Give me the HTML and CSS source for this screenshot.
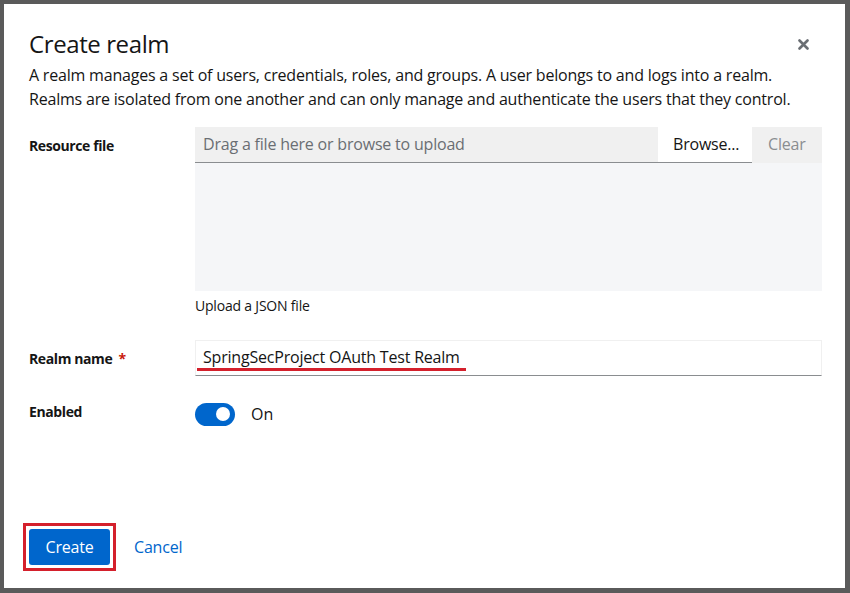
FILE: index.html
```html
<!DOCTYPE html>
<html lang="en">
<head>
<meta charset="utf-8">
<title>Create realm</title>
<link rel="stylesheet" href="styles.css">
</head>
<body>
<div class="modal">
  <header class="modal-header">
    <div class="title-row">
      <h1 class="title">Create realm</h1>
      <button class="close" aria-label="Close">
        <svg width="11" height="11" viewBox="0 0 11 11"><path d="M1.5 1.5 L9.5 9.5 M9.5 1.5 L1.5 9.5" stroke="#6a6e73" stroke-width="2.6" stroke-linecap="round"/></svg>
      </button>
    </div>
    <p class="desc">A realm manages a set of users, credentials, roles, and groups. A user belongs to and logs into a realm. Realms are isolated from one another and can only manage and authenticate the users that they control.</p>
  </header>

  <form class="form">
    <div class="row">
      <label class="label">Resource file</label>
      <div class="control">
        <div class="upload-bar">
          <div class="upload-input">Drag a file here or browse to upload</div>
          <div class="browse">Browse...</div>
          <div class="clear">Clear</div>
        </div>
        <div class="upload-area"></div>
        <div class="helper">Upload a JSON file</div>
      </div>
    </div>

    <div class="row">
      <label class="label">Realm name <span class="req">*</span></label>
      <div class="control">
        <div class="text-input"><span class="mark">SpringSecProject OAuth Test Realm</span></div>
      </div>
    </div>

    <div class="row row-switch">
      <label class="label label-switch">Enabled</label>
      <div class="control switch-wrap">
        <span class="switch"><span class="knob"></span></span>
        <span class="switch-text">On</span>
      </div>
    </div>
  </form>

  <footer class="footer">
    <span class="highlight"><button class="btn-primary">Create</button></span>
    <button class="btn-link">Cancel</button>
  </footer>
</div>
</body>
</html>
```

FILE: styles.css
```css
* { box-sizing: border-box; }
html, body { margin: 0; height: 100%; }
body {
  background: #5a5a5a;
  padding: 4px 5px 5px 4px;
  font-family: "Open Sans", "Liberation Sans", sans-serif;
  color: #151515;
}
.modal {
  background: #fff;
  height: 100%;
  display: flex;
  flex-direction: column;
  padding: 0 23px 17px 25px;
}
.modal-header { padding-top: 24px; }
.title-row {
  display: flex;
  justify-content: space-between;
  align-items: flex-start;
}
.title {
  margin: 0;
  font-size: 24px;
  font-weight: 400;
  line-height: 31px;
  letter-spacing: -0.4px;
}
.close {
  border: 0;
  background: none;
  padding: 0;
  margin: 11px 13px 0 0;
  width: 11px;
  height: 11px;
  display: flex;
}
.desc {
  margin: 4px 0 0;
  font-size: 16px;
  line-height: 24px;
  letter-spacing: -0.2px;
}
.form {
  margin-top: 16px;
  display: flex;
  flex-direction: column;
  gap: 24px;
}
.row {
  display: grid;
  grid-template-columns: 166px 1fr;
}
.label {
  font-size: 14px;
  font-weight: 700;
  line-height: 21px;
  padding-top: 8px;
  letter-spacing: -0.4px;
}
.req { color: #c9190b; margin-left: 3px; font-weight: 700; }
.label-switch { padding-top: 1px; }

.upload-bar {
  display: flex;
  height: 36px;
  font-size: 16px;
  letter-spacing: -0.2px;
}
.upload-input {
  flex: 1;
  background: #f0f0f0;
  color: #6a6e73;
  padding: 6px 8px;
  border-bottom: 1px solid #8a8d90;
}
.browse {
  width: 94px;
  background: #fff;
  padding: 6px 0 0 15px;
  border-bottom: 1px solid #8a8d90;
}
.clear {
  width: 70px;
  background: #f0f0f0;
  color: #8a8d90;
  padding: 6px 0 0 16px;
}
.upload-area {
  height: 128px;
  background: #f5f6f8;
}
.helper {
  font-size: 14px;
  line-height: 21px;
  margin-top: 4px;
  letter-spacing: -0.2px;
}
.text-input {
  height: 36px;
  border: 1px solid #f0f0f0;
  border-bottom-color: #8a8d90;
  padding: 5px 7px;
  font-size: 16px;
  line-height: 22px;
  letter-spacing: -0.2px;
}
.mark {
  margin: 0 -6px;
  padding: 0 6px;
  border-bottom: 3px solid #d4202c;
}
.switch-wrap {
  display: flex;
  align-items: center;
  gap: 16px;
  padding-top: 2px;
}
.switch {
  width: 40px;
  height: 23px;
  border-radius: 12px;
  background: #0066cc;
  display: flex;
  align-items: center;
  justify-content: flex-end;
  padding-right: 5px;
}
.knob {
  width: 14px;
  height: 14px;
  border-radius: 50%;
  background: #fff;
}
.switch-text { font-size: 16px; line-height: 24px; }

.footer {
  margin-top: auto;
  display: flex;
  align-items: center;
  gap: 2px;
}
.highlight {
  display: flex;
  margin-left: -6px;
  border: 3px solid #d4202c;
  padding: 3px;
}
.btn-primary {
  font-family: inherit;
  font-size: 16px;
  line-height: 24px;
  letter-spacing: -0.2px;
  color: #fff;
  background: #0066cc;
  border: 0;
  border-radius: 3px;
  padding: 6px 0;
  width: 81px;
  height: 36px;
}
.btn-link {
  font-family: inherit;
  font-size: 16px;
  line-height: 24px;
  letter-spacing: -0.2px;
  color: #0066cc;
  background: none;
  border: 0;
  padding: 6px 16px;
}
```
